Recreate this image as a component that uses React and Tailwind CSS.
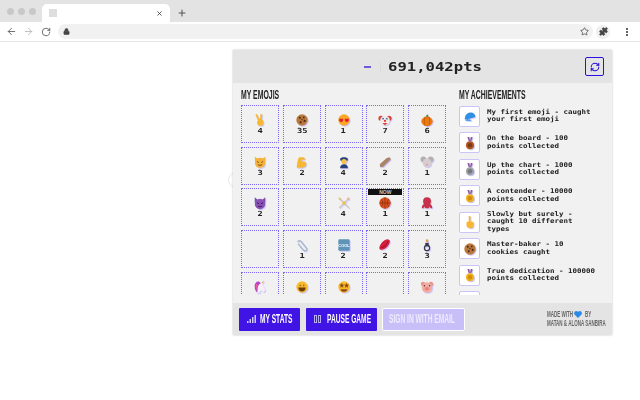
import { Puzzle, Star, RotateCw, ArrowLeft, ArrowRight, Lock, X, Plus, RefreshCw } from 'lucide-react';

const face = (fill, extra) => (
  <>
    <circle cx="8" cy="8" r="6.5" fill={fill} />
    {extra}
  </>
);

const medal = (fill, edge) => (
  <>
    <path d="M5 1h2.200L8 6 6.500 6zM11 1H8.800L8 6l1.500 0z" fill="#8d5a9e" />
    <circle cx="8" cy="10.500" r="4.600" fill={fill} />
    <circle cx="8" cy="10.500" r="2.600" fill={edge} />
  </>
);

const EMOJI = {
  peace: <path d="M4.500 1l2.500 5.500 1 0 .5-5.500 2.200.4L10 7.500c2.200.6 2.500 4 1.300 6-1 1.500-5 1.500-6 0-1-2-.8-4 .4-5L2.700 2z" fill="#f7b733" />,
  cookie: (
    <>
      <circle cx="8" cy="8" r="6.500" fill="#b9793d" />
      <circle cx="5.500" cy="5.500" r="1.200" fill="#4d2a14" />
      <circle cx="10" cy="5" r="1" fill="#4d2a14" />
      <circle cx="11" cy="9" r="1.200" fill="#4d2a14" />
      <circle cx="6.500" cy="10.500" r="1.200" fill="#4d2a14" />
      <circle cx="8" cy="7.500" r=".8" fill="#4d2a14" />
    </>
  ),
  hearts: face('#f9a825', <path d="M2.500 6.500h4.500v2.500l-2.200 1.500-2.300-1.500zM9 6.500h4.500v2.500l-2.200 1.500L9 9z" fill="#e5202b" />),
  clown: (
    <>
      <circle cx="3.500" cy="6" r="3" fill="#d8403a" />
      <circle cx="12.500" cy="6" r="3" fill="#d8403a" />
      <circle cx="8" cy="8.500" r="5.500" fill="#f3ebe6" />
      <circle cx="8" cy="9" r="1.300" fill="#d8403a" />
      <path d="M5 11.500h6L8 14z" fill="#d8403a" />
      <circle cx="5.800" cy="6.500" r="1" fill="#3b6ea5" />
      <circle cx="10.200" cy="6.500" r="1" fill="#3b6ea5" />
    </>
  ),
  pumpkin: (
    <>
      <ellipse cx="8" cy="9.500" rx="6.500" ry="5.500" fill="#ec7a12" />
      <path d="M7 4.500L7.500 2h2l-.5 2.500z" fill="#4f8a2b" />
      <path d="M6 4.500c-1.500 3-1.500 7 0 10M10 4.500c1.500 3 1.500 7 0 10" stroke="#bf5a08" fill="none" />
    </>
  ),
  cat: (
    <>
      <path d="M2 2l4 2.500h4L14 2l-.5 7H2.500z" fill="#f4b33c" />
      <circle cx="8" cy="9" r="5.800" fill="#f4b33c" />
      <path d="M4.500 7.500l2 1M11.500 7.500l-2 1M5.500 11c1.500 1 3.500 1 5 0" stroke="#6a4208" fill="none" />
    </>
  ),
  muscle: <path d="M5 2.500h5l2 2-2.500 1-1-.5-1.500 3c2-1.500 5-1 6 1.500 0 3-2 5-5 5H2c0-4 1-8 2-11z" fill="#f7b733" />,
  police: (
    <>
      <path d="M3.500 4.500C4 2 12 2 12.500 4.500L12 6.500H4z" fill="#27407a" />
      <circle cx="8" cy="7.500" r="3" fill="#f4c24d" />
      <path d="M3.500 15c0-3 2-4.500 4.500-4.500s4.500 1.500 4.500 4.500z" fill="#27407a" />
    </>
  ),
  bone: <path d="M2 10.500L10 3.500l3.500-1 1 2.500L6 13.500l-3.500.5z" fill="#a98467" />,
  mouse: (
    <>
      <circle cx="3.800" cy="5" r="3.200" fill="#b7aeb1" />
      <circle cx="12.200" cy="5" r="3.200" fill="#b7aeb1" />
      <circle cx="8" cy="9" r="5" fill="#d5cdd0" />
      <circle cx="8" cy="11" r="1" fill="#e88aa3" />
    </>
  ),
  devil: (
    <>
      <path d="M2 1.500l3.500 3h5l3.500-3 0 6H2z" fill="#7c4aa8" />
      <circle cx="8" cy="9" r="6" fill="#8a52b8" />
      <path d="M4.500 7.500l2.500 1.500M11.500 7.500L9 9M5.500 11.500c1.500 1 3.500 1 5 0" stroke="#311547" fill="none" />
    </>
  ),
  crossed: (
    <>
      <path d="M2.500 2.500l11 11M13.500 2.500l-11 11" stroke="#c9c3b8" strokeWidth="1.300" />
      <circle cx="8" cy="8" r="2" fill="#f0c04a" />
      <circle cx="3" cy="3" r="1.200" fill="#f0c04a" />
      <circle cx="13" cy="3" r="1.200" fill="#e8b184" />
    </>
  ),
  basket: (
    <>
      <circle cx="8" cy="8" r="6.500" fill="#d9521f" />
      <path d="M1.500 8h13M8 1.500v13M3.500 3.500c2.500 2.500 2.500 6.500 0 9M12.500 3.500c-2.500 2.500-2.500 6.500 0 9" stroke="#7e2a0b" fill="none" strokeWidth=".7" />
    </>
  ),
  octopus: (
    <>
      <circle cx="8" cy="6" r="4.500" fill="#c9304a" />
      <path d="M2 14c0-3 1.500-5 3-5h6c1.500 0 3 2 3 5h-2l-1-2-1 2H6l-1-2-1 2z" fill="#c9304a" />
    </>
  ),
  clip: <path d="M3 4.500c1-2 3-2 4-.5l6 7.500c1 1.500 0 3.500-2 3-1 0-1.500-.6-2-1.200L3.500 6.500" fill="none" stroke="#a6b9c9" strokeWidth="1.500" />,
  cool: (
    <>
      <rect x="1.500" y="1.500" width="13" height="13" rx="1.500" fill="#5d94b8" />
      <text x="8" y="10" fontSize="4.500" fontFamily="'Liberation Sans', sans-serif" fontWeight="700" fill="#fff" textAnchor="middle">COOL</text>
    </>
  ),
  lips: (
    <>
      <path d="M1.500 11c1-4 4-8 9-9.500 2 0 3.500 1 3 3-1 4.500-5 8.500-9.500 9-1.500 0-2.500-1-2.500-2.500z" fill="#d41f3a" />
      <path d="M3.500 11c3 0 6-3 8-7" stroke="#7c0f20" fill="none" strokeWidth=".8" />
    </>
  ),
  wheel: (
    <>
      <circle cx="8" cy="3" r="1.500" fill="#e2a04a" />
      <path d="M6 5.500h4v4H6z" fill="#3a3a52" />
      <circle cx="8" cy="11.500" r="3" fill="none" stroke="#39394f" strokeWidth="1.300" />
    </>
  ),
  unicorn: (
    <>
      <path d="M5 5l5-2 3 6 1 3-2 2-3-2-2 3H4z" fill="#f6eff8" />
      <path d="M6 1.500C3 2 1.500 5 2 8c0 3 1 5 3 6.500 0-3 .5-6 1-8 1-1.500 2-2.500 3-3z" fill="#b545c9" />
      <path d="M3.500 4C2.800 6 3 9 4 11l1.500-5z" fill="#ef5aa8" />
      <path d="M10 3l2.500-2.500L11.500 4z" fill="#e9a231" />
    </>
  ),
  grin: face('#f9b92c', <path d="M3.800 8.500h8.400c0 3-2 4.500-4.200 4.500S3.800 11.500 3.800 8.500zM5.500 5.500h1v1.500h-1zM9.500 5.500h1v1.500h-1z" fill="#6a3d06" />),
  star: face('#f9b92c', <path d="M2.500 5.500l2.300-.4L5.500 3l.8 2 2.200.3-1.700 1.400.5 2.200-1.800-1.200L3.700 9l.6-2.200zM8 5.500l2.200-.4L11 3l.8 2 2.200.3-1.700 1.400.5 2.200-1.800-1.200L9 9l.6-2.200zM4 10.500h8c-.6 2.200-2.200 3-4 3s-3.400-.8-4-3z" fill="#8e4c10" />),
  pig: (
    <>
      <circle cx="3.500" cy="4.500" r="2.500" fill="#e7928a" />
      <circle cx="12.500" cy="4.500" r="2.500" fill="#e7928a" />
      <circle cx="8" cy="8.500" r="6" fill="#f2aca4" />
      <ellipse cx="8" cy="10" rx="2.800" ry="2" fill="#e5857e" />
      <circle cx="5" cy="6.500" r=".8" fill="#4a2a28" />
      <circle cx="11" cy="6.500" r=".8" fill="#4a2a28" />
    </>
  ),
  cap: <path d="M2 12c0-5 3-8 7-8 3 0 5 2 5 5l-7 2-5 2.500 8 0-2-1.500z" fill="#2f8fe3" />,
  bronze: medal('#b4561f', '#7d3a12'),
  silver: medal('#9ea3a8', '#74787c'),
  gold: medal('#f0b31c', '#d38e0d'),
  point: <path d="M6.500 1h2v6l3.500 1v4c0 2-1.500 3-3.500 3S4 14 4 12V8l2.500-.5z" fill="#f7b733" />,
};

const CELLS = [
  ['peace', 4], ['cookie', 35], ['hearts', 1], ['clown', 7], ['pumpkin', 6],
  ['cat', 3], ['muscle', 2], ['police', 4], ['bone', 2], ['mouse', 1],
  ['devil', 2], [null], ['crossed', 4], ['basket', 1, true], ['octopus', 1],
  [null], ['clip', 1], ['cool', 2], ['lips', 2], ['wheel', 3],
  ['unicorn'], ['grin'], ['star'], [null], ['pig'],
];

const ACHIEVEMENTS = [
  ['cap', 'My first emoji - caught your first emoji'],
  ['bronze', 'On the board - 100 points collected'],
  ['silver', 'Up the chart - 1000 points collected'],
  ['gold', 'A contender - 10000 points collected'],
  ['point', 'Slowly but surely - caught 10 different types'],
  ['cookie', 'Master-baker - 10 cookies caught'],
  ['gold', 'True dedication - 100000 points collected'],
  [null, ''],
];

const MONO = "font-['DejaVu_Sans_Mono',monospace]";

function Emoji({ name, size = 14 }) {
  return (
    <svg viewBox="0 0 16 16" width={size} height={size} className="block drop-shadow-[1px_1px_0_#cfc8f7]">
      {EMOJI[name]}
    </svg>
  );
}

// no condensed face is installed, so squeeze the bold sans
function Narrow({ children, className = '' }) {
  return (
    <span className={`block whitespace-nowrap origin-left scale-x-[.53] font-bold ${className}`}>{children}</span>
  );
}

function Cell({ name, count, now }) {
  return (
    <div className="relative flex flex-col items-center pt-[7px] border border-dotted border-[#7a66f7]">
      {now && (
        <div className="absolute top-0 left-px right-px h-[6px] bg-[#111] text-[#ccc] text-[5px] leading-[6px] text-center font-bold">NOW</div>
      )}
      {name && <Emoji name={name} />}
      {count && <div className={`text-[7px] leading-[9px] scale-x-[1.25] font-bold text-[#222] ${MONO}`}>{count}</div>}
    </div>
  );
}

function Achievement({ icon, text }) {
  return (
    <div className="flex items-center gap-[7px] h-[21px] mb-[5.5px] shrink-0">
      <div className="w-[21px] h-[21px] shrink-0 flex items-center justify-center bg-white border border-[#cbc4f6] rounded-[2px]">
        {icon && <Emoji name={icon} size={14} />}
      </div>
      <div className={`w-[96px] shrink-0 origin-left scale-x-[1.15] text-[6.500px] leading-[7.300px] font-bold text-[#222] ${MONO}`}>{text}</div>
    </div>
  );
}

export default function App() {
  return (
    <div className="relative w-[640px] h-[400px] bg-white overflow-hidden font-['Liberation_Sans',sans-serif]">
      <div className="h-[22px] bg-[#e3e3e3] flex items-end">
        <div className="flex gap-[4px] pl-[7px] pr-[5px] self-center">
          <span className="w-[7px] h-[7px] rounded-full bg-[#c8c8c8]" />
          <span className="w-[7px] h-[7px] rounded-full bg-[#c8c8c8]" />
          <span className="w-[7px] h-[7px] rounded-full bg-[#c8c8c8]" />
        </div>
        <div className="ml-[1px] w-[128px] h-[18px] bg-white rounded-t-[5px] flex items-center justify-between px-[7px]">
          <span className="w-[8px] h-[8px] bg-[#dedede]" />
          <X size={7} strokeWidth={3} className="text-[#444]" />
        </div>
        <Plus size={10} strokeWidth={2.500} className="text-[#555] ml-[7px] mb-[4px]" />
      </div>

      <div className="h-[20px] bg-white border-b border-[#e6e6e6] flex items-center">
        <ArrowLeft size={11} className="text-[#666] ml-[6px]" />
        <ArrowRight size={11} className="text-[#bbb] ml-[6px]" />
        <RotateCw size={10} className="text-[#555] ml-[7px]" />
        <div className="ml-[7px] w-[535px] h-[15px] bg-[#f1f1f1] rounded-full flex items-center justify-between pl-[5px] pr-[4px]">
          <Lock size={7} fill="#444" className="text-[#444]" />
          <Star size={9} className="text-[#444]" />
        </div>
        <div className="ml-[3px] w-[14px] h-[14px] rounded-full bg-[#efefef] flex items-center justify-center">
          <Puzzle size={9} fill="#444" className="text-[#444]" />
        </div>
        <div className="ml-[16px] flex flex-col gap-[1px]">
          <span className="w-[2px] h-[2px] bg-[#666]" />
          <span className="w-[2px] h-[2px] bg-[#666]" />
          <span className="w-[2px] h-[2px] bg-[#666]" />
        </div>
      </div>

      <span className="absolute left-[228px] top-[172px] w-[16px] h-[16px] rounded-full border border-[#e8e8e8] bg-white" />

      <div className="relative ml-[233px] mt-[8px] w-[379px] h-[285px] bg-[#f1f1f1] flex flex-col shadow-[0_0_2px_rgba(0,0,0,0.25)]">
        <div className="h-[33px] shrink-0 bg-[#e4e4e4] flex items-center pl-[131px] pr-[8px]">
          <span className="w-[7px] h-[2px] bg-[#6a5ae0]" />
          <span className="w-px h-[12px] bg-[#dcdcdc] ml-[9px]" />
          <span className={`ml-[7px] w-[72px] origin-left scale-x-[1.3] whitespace-nowrap text-[12px] font-bold text-[#222] ${MONO}`}>691,042pts</span>
          <span className="ml-auto w-[19px] h-[19px] border-[1.5px] border-[#2a10e0] rounded-[2px] flex items-center justify-center">
            <RefreshCw size={10} strokeWidth={2.500} className="text-[#2a10e0]" />
          </span>
        </div>

        <div className="flex-1 min-h-0 flex pl-[8px] pt-[5px]">
          <div className="w-[205px] shrink-0 h-[207px] overflow-hidden">
            <Narrow className="text-[13px] leading-[14px] text-[#222] mb-[3px]">MY EMOJIS</Narrow>
            <div className="grid grid-cols-[repeat(5,38px)] auto-rows-[38px] justify-between gap-y-[3.700px]">
              {CELLS.map(([name, count, now], i) => (
                <Cell key={i} name={name} count={count} now={now} />
              ))}
            </div>
          </div>
          <div className="ml-[13px] w-[150px] h-[207px] overflow-hidden">
            <Narrow className="text-[13px] leading-[14px] text-[#222] mb-[3.500px]">MY ACHIEVEMENTS</Narrow>
            <div className="flex flex-col">
              {ACHIEVEMENTS.map(([icon, text], i) => (
                <Achievement key={i} icon={icon} text={text} />
              ))}
            </div>
          </div>
        </div>

        <div className="h-[32px] shrink-0 bg-[#e4e4e4] flex items-center pl-[6px] pr-[8px]">
          <div className="w-[61px] h-[23px] bg-[#3f14e4] text-white rounded-[1px] flex items-center pl-[8px] overflow-hidden">
            <svg viewBox="0 0 9 8" width="9" height="8" className="shrink-0 fill-[#cfc8f7]">
              <path d="M0 6h1.500v2H0zM2.500 4H4v4H2.500zM5 2h1.500v6H5zM7.500 0H9v8H7.500z" />
            </svg>
            <Narrow className="ml-[4px] w-[32px] text-[12.500px]">MY STATS</Narrow>
          </div>
          <div className="ml-[6px] w-[71px] h-[23px] bg-[#3f14e4] text-white rounded-[1px] flex items-center pl-[8px] overflow-hidden">
            <span className="flex gap-[1px] shrink-0">
              <span className="w-[3px] h-[8px] border border-[#b9adf6]" />
              <span className="w-[3px] h-[8px] border border-[#b9adf6]" />
            </span>
            <Narrow className="ml-[6px] w-[42px] text-[12.500px]">PAUSE GAME</Narrow>
          </div>
          <div className="ml-[5px] w-[83px] h-[23px] bg-[#c9bff8] text-[#eeeaff] border border-white rounded-[2px] flex items-center pl-[6px] overflow-hidden">
            <Narrow className="w-[68px] text-[12.500px]">SIGN IN WITH EMAIL</Narrow>
          </div>
          <div className="ml-auto w-[57px] text-[8.500px] leading-[9px] text-[#666]">
            <div className="flex items-center">
              <Narrow className="w-[27px]">MADE WITH</Narrow>
              <svg viewBox="0 0 16 14" width="8" height="7" className="shrink-0 fill-[#2a8ae8]">
                <path d="M8 14L1 7C-1 4 1 0 4.500 0 6 0 7 .8 8 2c1-1.200 2-2 3.500-2C15 0 17 4 15 7z" />
              </svg>
              <Narrow className="ml-[3px] w-[8px]">BY</Narrow>
            </div>
            <Narrow>MATAN &amp; ALONA SANBIRA</Narrow>
          </div>
        </div>
      </div>
    </div>
  );
}
